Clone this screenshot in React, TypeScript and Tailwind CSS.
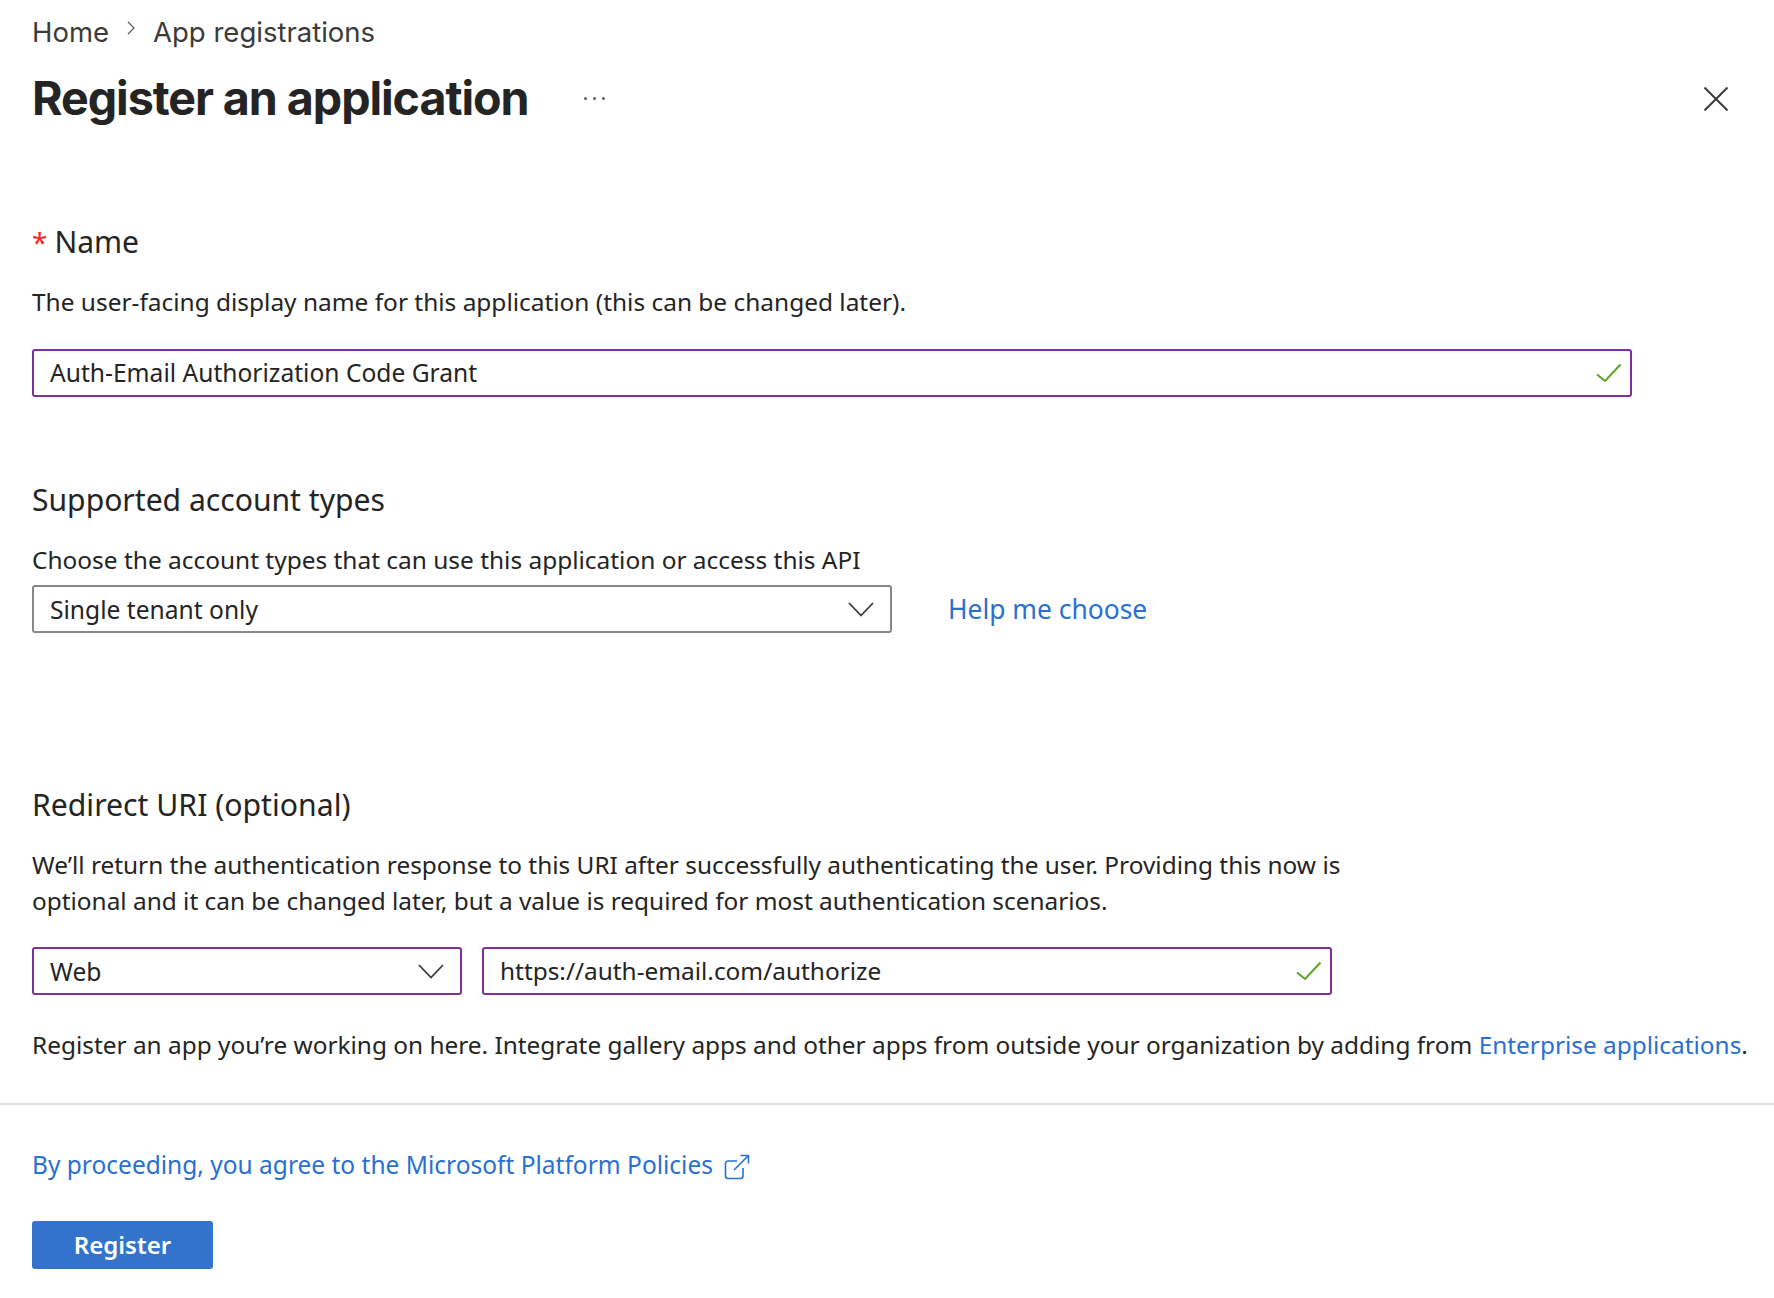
import React from "react";

const font = "[font-family:'Noto_Sans',sans-serif]";

const Check = () => (
  <svg width="26" height="20" viewBox="0 0 26 20" fill="none" className="shrink-0">
    <path d="M1 11.5 L9 18 L24.5 1.5" stroke="#5ba323" strokeWidth="2" />
  </svg>
);

const Chevron = () => (
  <svg width="26" height="15" viewBox="0 0 26 15" fill="none" className="shrink-0">
    <path d="M1 1 L13 13.5 L25 1" stroke="#3b3b3b" strokeWidth="1.8" />
  </svg>
);

const Field = ({ value, className }: { value: string; className: string }) => (
  <div className={`flex h-12 items-center justify-between rounded-[3px] border-2 border-[#7f2f9f] pl-4 pr-2 ${className}`}>
    <span>{value}</span>
    <Check />
  </div>
);

const Dropdown = ({ value, className }: { value: string; className: string }) => (
  <div className={`flex h-12 items-center justify-between rounded-[3px] border-2 pl-4 pr-4 text-[24.6px] ${className}`}>
    <span className="mt-[2px]">{value}</span>
    <Chevron />
  </div>
);

export default function App() {
  return (
    <div className={`${font} min-h-[1298px] w-full bg-white text-[24.45px] leading-[36px] text-[#242424]`}>
      <div className="px-8 pt-[14px]">
        {/* Breadcrumb */}
        <div className="flex h-9 items-center font-['Inter',sans-serif] text-[27.5px] text-[#3b3b3b]">
          <span>Home</span>
          <svg width="10" height="16" viewBox="0 0 10 16" fill="none" className="mx-[17px] -mt-2">
            <path d="M2 2 L8 8 L2 14" stroke="#605e5c" strokeWidth="1.3" />
          </svg>
          <span>App registrations</span>
        </div>

        {/* Title */}
        <div className="mt-[18px] flex h-[60px] items-center justify-between pr-[14px]">
          <div className="flex items-center">
            <h1 className="font-['Inter',sans-serif] text-[46.6px] font-bold leading-[60px] tracking-[-1.05px] text-[#242424]">Register an application</h1>
            <div className="ml-[55px] flex gap-[6px]">
              <span className="h-[3px] w-[3px] rounded-full bg-[#605e5c]" />
              <span className="h-[3px] w-[3px] rounded-full bg-[#605e5c]" />
              <span className="h-[3px] w-[3px] rounded-full bg-[#605e5c]" />
            </div>
          </div>
          <svg width="24" height="24" viewBox="0 0 24 24" fill="none" className="mt-[2px]">
            <path d="M0.5 0.5 L23.5 23.5 M23.5 0.5 L0.5 23.5" stroke="#3b3b3b" strokeWidth="2" />
          </svg>
        </div>

        {/* Name */}
        <div className="mt-[94px] flex h-10 items-center text-[30px]">
          <span className="mr-[7px] text-[28px] text-[#ee2a1f]">*</span>
          <span>Name</span>
        </div>
        <p className="mt-[22px]">The user-facing display name for this application (this can be changed later).</p>
        <Field value="Auth-Email Authorization Code Grant" className="mt-[29px] w-[1600px] text-[24.6px]" />

        {/* Supported account types */}
        <h2 className="mt-[83px] h-10 text-[30.1px] leading-10">Supported account types</h2>
        <p className="mt-[22px]">Choose the account types that can use this application or access this API</p>
        <div className="mt-[7px] flex items-center">
          <Dropdown value="Single tenant only" className="w-[860px] border-[#8a8886]" />
          <a className="ml-[56px] text-[26.4px] text-[#2a70d2]">Help me choose</a>
        </div>

        {/* Redirect URI */}
        <h2 className="mt-[152px] h-10 text-[30.2px] leading-10">Redirect URI (optional)</h2>
        <p className="mt-[22px] w-[1340px] text-[24.4px]">
          We’ll return the authentication response to this URI after successfully authenticating the user. Providing this now is optional and it can be changed later, but a value is required for most authentication scenarios.
        </p>
        <div className="mt-[28px] flex gap-5">
          <Dropdown value="Web" className="w-[430px] border-[#7f2f9f]" />
          <Field value="https://auth-email.com/authorize" className="w-[850px] text-[24.4px]" />
        </div>
        <p className="mt-[32px] whitespace-nowrap text-[24.4px]">
          Register an app you’re working on here. Integrate gallery apps and other apps from outside your organization by adding from{" "}
          <a className="text-[#2a70d2]">Enterprise applications</a>.
        </p>
      </div>

      <div className="mt-[40px] h-[2px] bg-[#dedede]" />

      <div className="px-8">
        <div className="mt-[42px] flex h-9 items-center text-[24.5px] text-[#2a70d2]">
          <span>By proceeding, you agree to the Microsoft Platform Policies</span>
          <svg width="26" height="26" viewBox="0 0 26 26" fill="none" className="ml-[11px] mt-[3px]">
            <path d="M13 7 H4 a2.5 2.5 0 0 0 -2.5 2.5 V22 a2.5 2.5 0 0 0 2.5 2.5 H16.5 a2.5 2.5 0 0 0 2.5 -2.5 V14 M10 16 L24.5 1.5 M16.5 1.5 H24.5 V9.5" stroke="#2a70d2" strokeWidth="1.6" />
          </svg>
        </div>
        <button className="mt-[38px] h-12 w-[181px] rounded-[3px] bg-[#3373cc] text-[24px] font-semibold text-white">Register</button>
      </div>
    </div>
  );
}
